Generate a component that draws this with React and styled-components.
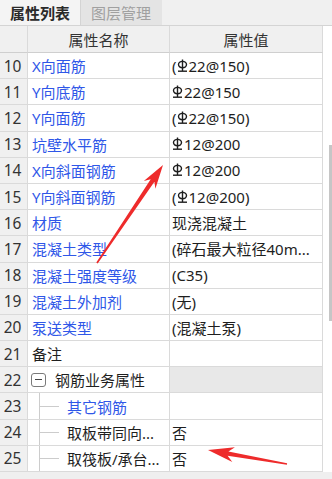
import React from "react";
import styled, { createGlobalStyle } from "styled-components";

const GlobalStyle = createGlobalStyle`
	html, body {
		margin: 0;
		padding: 0;
		background: #ffffff;
	}
	body {
		font-family: "Noto Sans", "Noto Sans CJK SC", sans-serif;
	}
`;

const Page = styled.div`
	position: relative;
	width: 332px;
	height: 479px;
	overflow: hidden;
	background: #efefef;
	display: flex;
	flex-direction: column;
`;

const TabBar = styled.div`
	display: flex;
	height: 25px;
	border-bottom: 1px solid #d4d4d4;
	background: #f0f0f0;
`;

const Tab = styled.div`
	width: 80px;
	display: flex;
	align-items: center;
	justify-content: center;
	font-family: "Noto Sans CJK SC", sans-serif;
	font-size: 15px;
	font-weight: ${(p) => (p.active ? 700 : 400)};
	color: ${(p) => (p.active ? "#2a2a2a" : "#a0a0a0")};
	background: ${(p) => (p.active ? "#f4f4f4" : "#e4e4e4")};
	border-right: 1px solid ${(p) => (p.active ? "#d4d4d4" : "#e4e4e4")};
`;

const Body = styled.div`
	display: flex;
	background: #ffffff;
`;

const Table = styled.div`
	width: 323px;
	display: flex;
	flex-direction: column;
`;

const ScrollTrack = styled.div`
	flex: 1;
	position: relative;
	background: #ffffff;

	&::after {
		content: "";
		position: absolute;
		right: 0;
		top: 119px;
		width: 3px;
		height: 176px;
		background: #c6c6c6;
	}
`;

const Row = styled.div`
	display: grid;
	grid-template-columns: 28px 142px 153px;
	height: ${(p) => (p.header ? "27px" : "26.2px")};
`;

const Cell = styled.div`
	box-sizing: border-box;
	border-right: 1px solid #dadada;
	border-bottom: 1px solid #dadada;
	display: flex;
	align-items: center;
	overflow: hidden;
	white-space: nowrap;
	font-size: 15px;
`;

const NumCell = styled(Cell)`
	justify-content: center;
	background: #f0f0f0;
	color: #333333;
	font-family: "Noto Sans", sans-serif;
	font-size: 15.5px;
	padding-right: 2px;
`;

const HeaderCell = styled(Cell)`
	justify-content: center;
	background: #f0f0f0;
	color: #333333;
	font-family: "Noto Sans CJK SC", sans-serif;
	border-bottom-color: #cfcfcf;
`;

const NameCell = styled(Cell)`
	padding-left: 4px;
	color: ${(p) => (p.plain ? "#1f1f1f" : "#2f57e8")};
	font-family: "Noto Sans", "Noto Sans CJK SC", sans-serif;
	align-items: stretch;

	& > span {
		display: flex;
		align-items: center;
	}
`;

const ValueCell = styled(Cell)`
	padding-left: 2px;
	color: #1e1e1e;
	background: ${(p) => (p.group ? "#e8e8e8" : "#ffffff")};
	font-family: "Noto Sans", "Noto Sans CJK SC", sans-serif;
`;

const ToggleBox = styled.span`
	box-sizing: border-box;
	align-self: center;
	width: 15px;
	height: 14px;
	margin-left: -1px;
	margin-right: 9px;
	border: 1px solid #7a7a7a;
	border-radius: 3px;
	display: flex;
	align-items: center;
	justify-content: center;

	&::before {
		content: "";
		width: 7px;
		height: 1px;
		background: #444444;
	}
`;

const Guide = styled.span`
	width: 19px;
	margin-left: 7px;
	margin-right: 8px;
	border-left: 1px solid #cccccc;
	margin-bottom: -1px;

	&& {
		display: flex;
		align-items: center;
	}

	&::after {
		content: "";
		width: 100%;
		height: 1px;
		background: #cccccc;
	}
`;

const ArrowLayer = styled.svg`
	position: absolute;
	left: 0;
	top: 0;
	pointer-events: none;
`;

const Rebar = () => (
	<svg width="11" height="14" viewBox="0 0 11 14" style={{ marginRight: "1px", verticalAlign: "-1px" }}>
		<g stroke="#1e1e1e" strokeWidth="1.4" fill="none">
			<ellipse cx="5.5" cy="5.6" rx="4" ry="3.2" />
			<line x1="5.5" y1="0.5" x2="5.5" y2="12" />
			<line x1="1" y1="12.2" x2="10" y2="12.2" />
		</g>
	</svg>
);

const renderValue = (v) =>
	v.split("Φ").map((part, i) => (
		<React.Fragment key={i}>
			{i > 0 && <Rebar />}
			{part}
		</React.Fragment>
	));

const rows = [
	{ n: 10, name: "X向面筋", value: "(Φ22@150)" },
	{ n: 11, name: "Y向底筋", value: "Φ22@150" },
	{ n: 12, name: "Y向面筋", value: "(Φ22@150)" },
	{ n: 13, name: "坑壁水平筋", value: "Φ12@200" },
	{ n: 14, name: "X向斜面钢筋", value: "Φ12@200" },
	{ n: 15, name: "Y向斜面钢筋", value: "(Φ12@200)" },
	{ n: 16, name: "材质", value: "现浇混凝土" },
	{ n: 17, name: "混凝土类型", value: "(碎石最大粒径40m..." },
	{ n: 18, name: "混凝土强度等级", value: "(C35)" },
	{ n: 19, name: "混凝土外加剂", value: "(无)" },
	{ n: 20, name: "泵送类型", value: "(混凝土泵)" },
	{ n: 21, name: "备注", value: "", plain: true },
	{ n: 22, name: "钢筋业务属性", value: "", plain: true, group: true },
	{ n: 23, name: "其它钢筋", value: "", child: true },
	{ n: 24, name: "取板带同向...", value: "否", plain: true, child: true },
	{ n: 25, name: "取筏板/承台...", value: "否", plain: true, child: true },
];

// arrow polygon from tail to tip, tapering shaft and a barbed head
const arrowPoints = ([tx, ty], [hx, hy], headLen, headW, tailW, neckW) => {
	const dx = hx - tx;
	const dy = hy - ty;
	const len = Math.hypot(dx, dy);
	const ux = dx / len;
	const uy = dy / len;
	const px = -uy;
	const py = ux;
	const bx = hx - ux * headLen;
	const by = hy - uy * headLen;
	const nx = hx - ux * headLen * 0.78;
	const ny = hy - uy * headLen * 0.78;
	const pts = [
		[tx + px * tailW, ty + py * tailW],
		[nx + px * neckW, ny + py * neckW],
		[bx + px * headW, by + py * headW],
		[hx, hy],
		[bx - px * headW, by - py * headW],
		[nx - px * neckW, ny - py * neckW],
		[tx - px * tailW, ty - py * tailW],
	];
	return pts.map((p) => p.map((c) => c.toFixed(1)).join(",")).join(" ");
};

const App = () => {
	return (
		<Page>
			<GlobalStyle />
			<TabBar>
				<Tab active>属性列表</Tab>
				<Tab>图层管理</Tab>
			</TabBar>
			<Body>
				<Table>
					<Row header>
						<HeaderCell />
						<HeaderCell>属性名称</HeaderCell>
						<HeaderCell>属性值</HeaderCell>
					</Row>
					{rows.map((r) => (
						<Row key={r.n}>
							<NumCell>{r.n}</NumCell>
							<NameCell plain={r.plain}>
								{r.group && <ToggleBox />}
								{r.child && <Guide />}
								<span>{r.name}</span>
							</NameCell>
							<ValueCell group={r.group}>{renderValue(r.value)}</ValueCell>
						</Row>
					))}
				</Table>
				<ScrollTrack />
			</Body>
			<ArrowLayer width="332" height="479">
				<polygon points={arrowPoints([97, 263], [163, 165], 24, 7, 0.8, 2.2)} fill="#ee2b2b" />
				<polygon points={arrowPoints([287, 464], [208, 450], 26, 7.5, 0.8, 2.2)} fill="#ee2b2b" />
			</ArrowLayer>
		</Page>
	);
};

export default App;
